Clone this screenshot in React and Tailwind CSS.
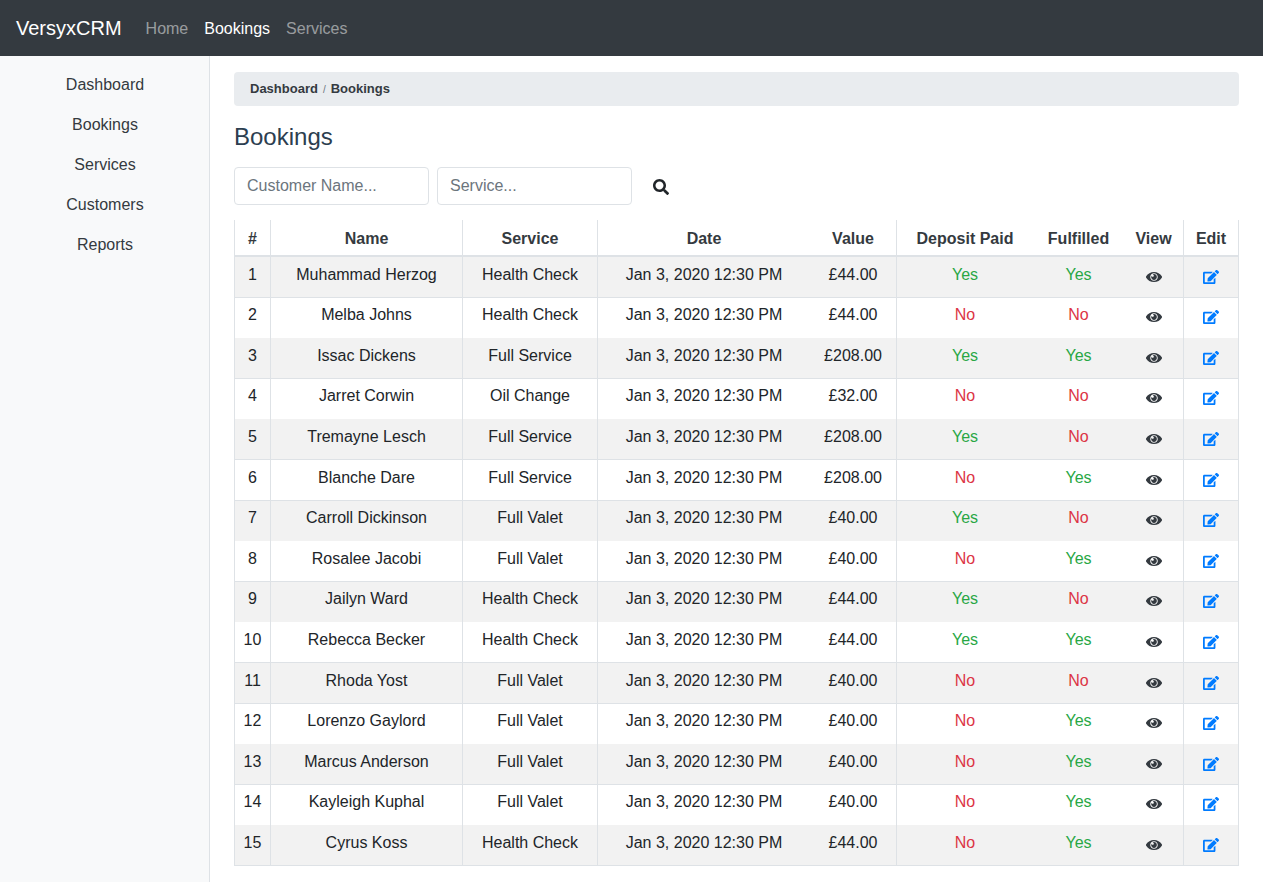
import { FaSearch, FaEdit } from "react-icons/fa";

const bookings = [
  ["Muhammad Herzog", "Health Check", "44.00", true, true],
  ["Melba Johns", "Health Check", "44.00", false, false],
  ["Issac Dickens", "Full Service", "208.00", true, true],
  ["Jarret Corwin", "Oil Change", "32.00", false, false],
  ["Tremayne Lesch", "Full Service", "208.00", true, false],
  ["Blanche Dare", "Full Service", "208.00", false, true],
  ["Carroll Dickinson", "Full Valet", "40.00", true, false],
  ["Rosalee Jacobi", "Full Valet", "40.00", false, true],
  ["Jailyn Ward", "Health Check", "44.00", true, false],
  ["Rebecca Becker", "Health Check", "44.00", true, true],
  ["Rhoda Yost", "Full Valet", "40.00", false, false],
  ["Lorenzo Gaylord", "Full Valet", "40.00", false, true],
  ["Marcus Anderson", "Full Valet", "40.00", false, true],
  ["Kayleigh Kuphal", "Full Valet", "40.00", false, true],
  ["Cyrus Koss", "Health Check", "44.00", false, true],
];

const columns = [
  ["#", "w-[36px] border-l"],
  ["Name", "w-[192px] border-l"],
  ["Service", "w-[135px] border-l"],
  ["Date", "w-[213px] border-l"],
  ["Value", "w-[86px]"],
  ["Deposit Paid", "w-[137px] border-l"],
  ["Fulfilled", "w-[91px]"],
  ["View", "w-[59px]"],
  ["Edit", "w-[56px] border-x"],
];

const navLinks = ["Home", "Bookings", "Services"];
const sideLinks = ["Dashboard", "Bookings", "Services", "Customers", "Reports"];

const ruledRow = "*:h-[41px] *:border-b *:pt-1.5";
const plainRow = "*:h-10 *:pt-[5px]";

// Rules fall under the first, third and fifth row of every group of five.
function isRuled(index) {
  return (index % 5) % 2 === 0;
}

function EyeIcon() {
  return (
    <svg viewBox="0 0 576 512" className="size-4" fill="currentColor" aria-hidden="true">
      <path d="M569.354 231.631C512.969 135.949 407.81 72 288 72 168.14 72 63.004 135.994 6.646 231.631a47.999 47.999 0 0 0 0 48.739C63.031 376.051 168.19 440 288 440c119.86 0 224.996-63.994 281.354-159.631a47.997 47.997 0 0 0 0-48.738zM288 392c-75.162 0-136-60.827-136-136 0-75.162 60.826-136 136-136 75.162 0 136 60.826 136 136 0 75.162-60.826 136-136 136zm104-136c0 57.438-46.562 104-104 104s-104-46.562-104-104c0-17.708 4.431-34.379 12.236-48.973l-.001.032c0 23.651 19.173 42.823 42.824 42.823s42.824-19.173 42.824-42.823c0-23.651-19.173-42.824-42.824-42.824l-.032.001C253.621 156.431 270.292 152 288 152c57.438 0 104 46.562 104 104z" />
    </svg>
  );
}

function YesNo({ value }) {
  return (
    <span className={value ? "text-[#28a745]" : "text-[#dc3545]"}>
      {value ? "Yes" : "No"}
    </span>
  );
}

function Navbar() {
  return (
    <nav className="flex h-14 items-center bg-[#343a40] px-4">
      <a href="#" className="mr-4 text-xl text-white">VersyxCRM</a>
      {navLinks.map((label) => (
        <a
          key={label}
          href="#"
          className={label === "Bookings" ? "px-2 pt-0.5 text-white" : "px-2 pt-0.5 text-white/50"}
        >
          {label}
        </a>
      ))}
    </nav>
  );
}

function Sidebar() {
  return (
    <aside className="w-[210px] shrink-0 border-r border-[#dee2e6] bg-[#f8f9fa] pt-[9px]">
      {sideLinks.map((label) => (
        <a key={label} href="#" className="block py-2 pl-[17px] pr-4 text-center text-[#343a40]">
          {label}
        </a>
      ))}
    </aside>
  );
}

function SearchForm() {
  const field =
    "h-[38px] w-[195px] rounded border border-[#dee2e6] bg-white px-3 leading-6 placeholder:text-[#6c757d] outline-none";
  return (
    <form className="mb-[15px] flex items-center gap-2">
      <input type="text" aria-label="Customer Name" placeholder="Customer Name..." className={field} />
      <input type="text" aria-label="Service" placeholder="Service..." className={field} />
      <button type="button" aria-label="Search" className="px-[13px] pt-0.5 text-[#212529]">
        <FaSearch />
      </button>
    </form>
  );
}

function BookingsTable() {
  return (
    <table className="w-full table-fixed border-separate border-spacing-0 text-center">
      <thead className="text-[#343a40]">
        <tr>
          {columns.map(([label, look]) => (
            <th
              key={label}
              scope="col"
              className={`h-[37px] border-b-2 border-[#dee2e6] px-0 pt-0.5 pb-0 font-bold ${look}`}
            >
              {label}
            </th>
          ))}
        </tr>
      </thead>
      <tbody>
        {bookings.map(([name, service, value, paid, fulfilled], i) => (
          <tr
            key={name}
            className={`align-top odd:bg-[#f2f2f2] *:border-[#dee2e6] *:px-0 *:pb-0 ${isRuled(i) ? ruledRow : plainRow}`}
          >
            <td className="border-l">{i + 1}</td>
            <td className="border-l">{name}</td>
            <td className="border-l">{service}</td>
            <td className="border-l">Jan 3, 2020 12:30 PM</td>
            <td>£{value}</td>
            <td className="border-l"><YesNo value={paid} /></td>
            <td><YesNo value={fulfilled} /></td>
            <td>
              <a href="#" aria-label={`View ${name}`} className="inline-block pt-1.5 text-[#343a40]"><EyeIcon /></a>
            </td>
            <td className="border-x">
              <a href="#" aria-label={`Edit ${name}`} className="inline-block pt-1.5 pr-px text-[#007bff]"><FaEdit /></a>
            </td>
          </tr>
        ))}
      </tbody>
    </table>
  );
}

export default function App() {
  return (
    <div className="flex min-h-screen flex-col bg-white font-['Liberation_Sans',Arial,sans-serif] text-base text-[#212529]">
      <Navbar />
      <div className="flex grow">
        <Sidebar />
        <main className="min-w-0 grow px-6 py-4">
          <nav
            aria-label="Breadcrumb"
            className="mb-[15px] flex h-[34px] items-center gap-[5px] rounded bg-[#e9ecef] px-4 text-[13px] font-bold text-[#343a40]"
          >
            <a href="#">Dashboard</a>
            <span className="text-[10px] font-normal text-[#6c757d]">/</span>
            <span>Bookings</span>
          </nav>
          <h1 className="mb-3.5 text-2xl leading-8 text-[#2c3e50]">Bookings</h1>
          <SearchForm />
          <BookingsTable />
        </main>
      </div>
    </div>
  );
}
